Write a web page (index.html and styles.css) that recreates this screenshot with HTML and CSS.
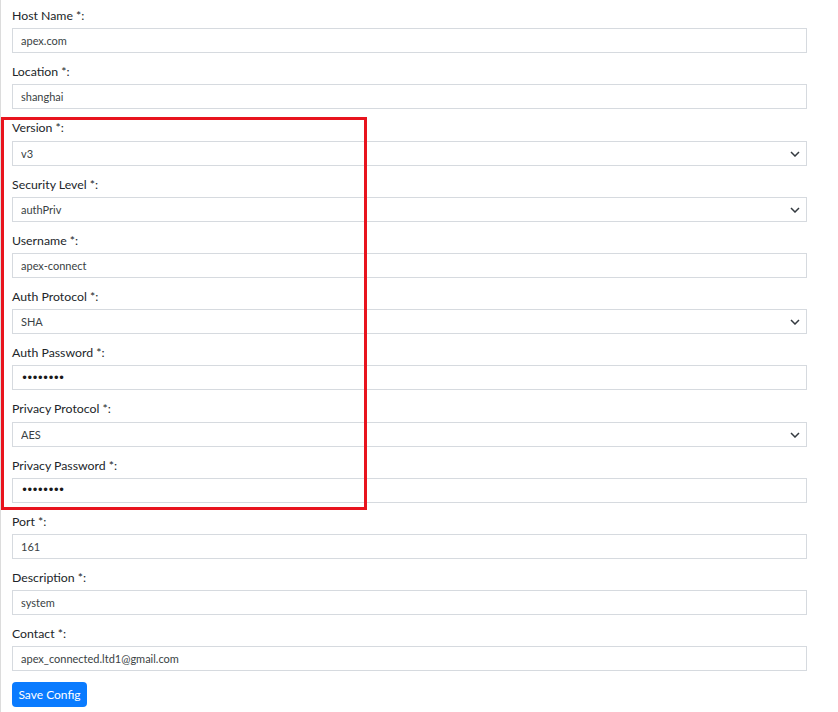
FILE: index.html
```html
<!DOCTYPE html>
<html lang="en">
<head>
<meta charset="utf-8">
<title>SNMP Config</title>
<link rel="stylesheet" href="styles.css">
</head>
<body>
<div class="page">
  <form class="form">
    <div class="field">
      <label class="label">Host Name *:</label>
      <input class="control" type="text" value="apex.com">
    </div>
    <div class="field">
      <label class="label">Location *:</label>
      <input class="control" type="text" value="shanghai">
    </div>
    <div class="highlight">
      <div class="field">
        <label class="label">Version *:</label>
        <div class="select-wrap">
          <select class="control select"><option>v3</option></select>
          <svg class="chev" width="10" height="6" viewBox="0 0 10 6"><path d="M1 1 L5 5 L9 1" fill="none" stroke="#343a40" stroke-width="1.5"/></svg>
        </div>
      </div>
      <div class="field">
        <label class="label">Security Level *:</label>
        <div class="select-wrap">
          <select class="control select"><option>authPriv</option></select>
          <svg class="chev" width="10" height="6" viewBox="0 0 10 6"><path d="M1 1 L5 5 L9 1" fill="none" stroke="#343a40" stroke-width="1.5"/></svg>
        </div>
      </div>
      <div class="field">
        <label class="label">Username *:</label>
        <input class="control" type="text" value="apex-connect">
      </div>
      <div class="field">
        <label class="label">Auth Protocol *:</label>
        <div class="select-wrap">
          <select class="control select"><option>SHA</option></select>
          <svg class="chev" width="10" height="6" viewBox="0 0 10 6"><path d="M1 1 L5 5 L9 1" fill="none" stroke="#343a40" stroke-width="1.5"/></svg>
        </div>
      </div>
      <div class="field">
        <label class="label">Auth Password *:</label>
        <div class="control pw"><span class="dots">••••••••</span></div>
      </div>
      <div class="field">
        <label class="label">Privacy Protocol *:</label>
        <div class="select-wrap">
          <select class="control select"><option>AES</option></select>
          <svg class="chev" width="10" height="6" viewBox="0 0 10 6"><path d="M1 1 L5 5 L9 1" fill="none" stroke="#343a40" stroke-width="1.5"/></svg>
        </div>
      </div>
      <div class="field">
        <label class="label">Privacy Password *:</label>
        <div class="control pw"><span class="dots">••••••••</span></div>
      </div>
    </div>
    <div class="field">
      <label class="label">Port *:</label>
      <input class="control" type="text" value="161">
    </div>
    <div class="field">
      <label class="label">Description *:</label>
      <input class="control" type="text" value="system">
    </div>
    <div class="field">
      <label class="label">Contact *:</label>
      <input class="control" type="text" value="apex_connected.ltd1@gmail.com">
    </div>
    <button class="btn" type="button">Save Config</button>
  </form>
</div>
</body>
</html>
```

FILE: styles.css
```css
html, body {
  margin: 0;
  padding: 0;
  background: #ffffff;
}

body {
  font-family: Lato, "Open Sans", "Liberation Sans", sans-serif;
  color: #212529;
}

.page {
  box-sizing: border-box;
  min-height: 712px;
  border-left: 1px solid #dcdcdc;
  padding: 8px 31px 8px 11px;
}

.form {
  display: flex;
  flex-direction: column;
}

.field {
  display: flex;
  flex-direction: column;
  margin-bottom: 11px;
}

.label {
  display: block;
  font-size: 12.3px;
  line-height: 15.2px;
  height: 15.2px;
  margin-bottom: 5px;
  color: #212529;
}

.control {
  box-sizing: border-box;
  width: 100%;
  height: 25px;
  margin: 0;
  padding: 0 8px;
  border: 1px solid #d6dadf;
  border-radius: 0;
  background: #ffffff;
  font-family: Lato, "Open Sans", "Liberation Sans", sans-serif;
  font-size: 11px;
  color: #3a3f44;
  outline: none;
}

.select-wrap {
  position: relative;
}

.select {
  -webkit-appearance: none;
  appearance: none;
  display: block;
}

.chev {
  position: absolute;
  right: 7px;
  top: 10px;
  pointer-events: none;
}

.pw {
  display: flex;
  align-items: center;
}

.dots {
  font-family: "DejaVu Sans", sans-serif;
  font-size: 12px;
  letter-spacing: -1.8px;
  color: #1a1a1a;
}

.highlight {
  position: relative;
  display: flex;
  flex-direction: column;
}

.highlight::before {
  content: "";
  position: absolute;
  z-index: 2;
  left: -11px;
  top: -3px;
  width: 366px;
  height: 393px;
  box-sizing: border-box;
  border: 3px solid #e8141e;
  pointer-events: none;
}

.btn {
  align-self: flex-start;
  width: 75px;
  height: 25px;
  padding: 0;
  border: none;
  border-radius: 4px;
  background: #0a7bff;
  color: #ffffff;
  font-family: Lato, "Open Sans", "Liberation Sans", sans-serif;
  font-size: 12px;
}
```
